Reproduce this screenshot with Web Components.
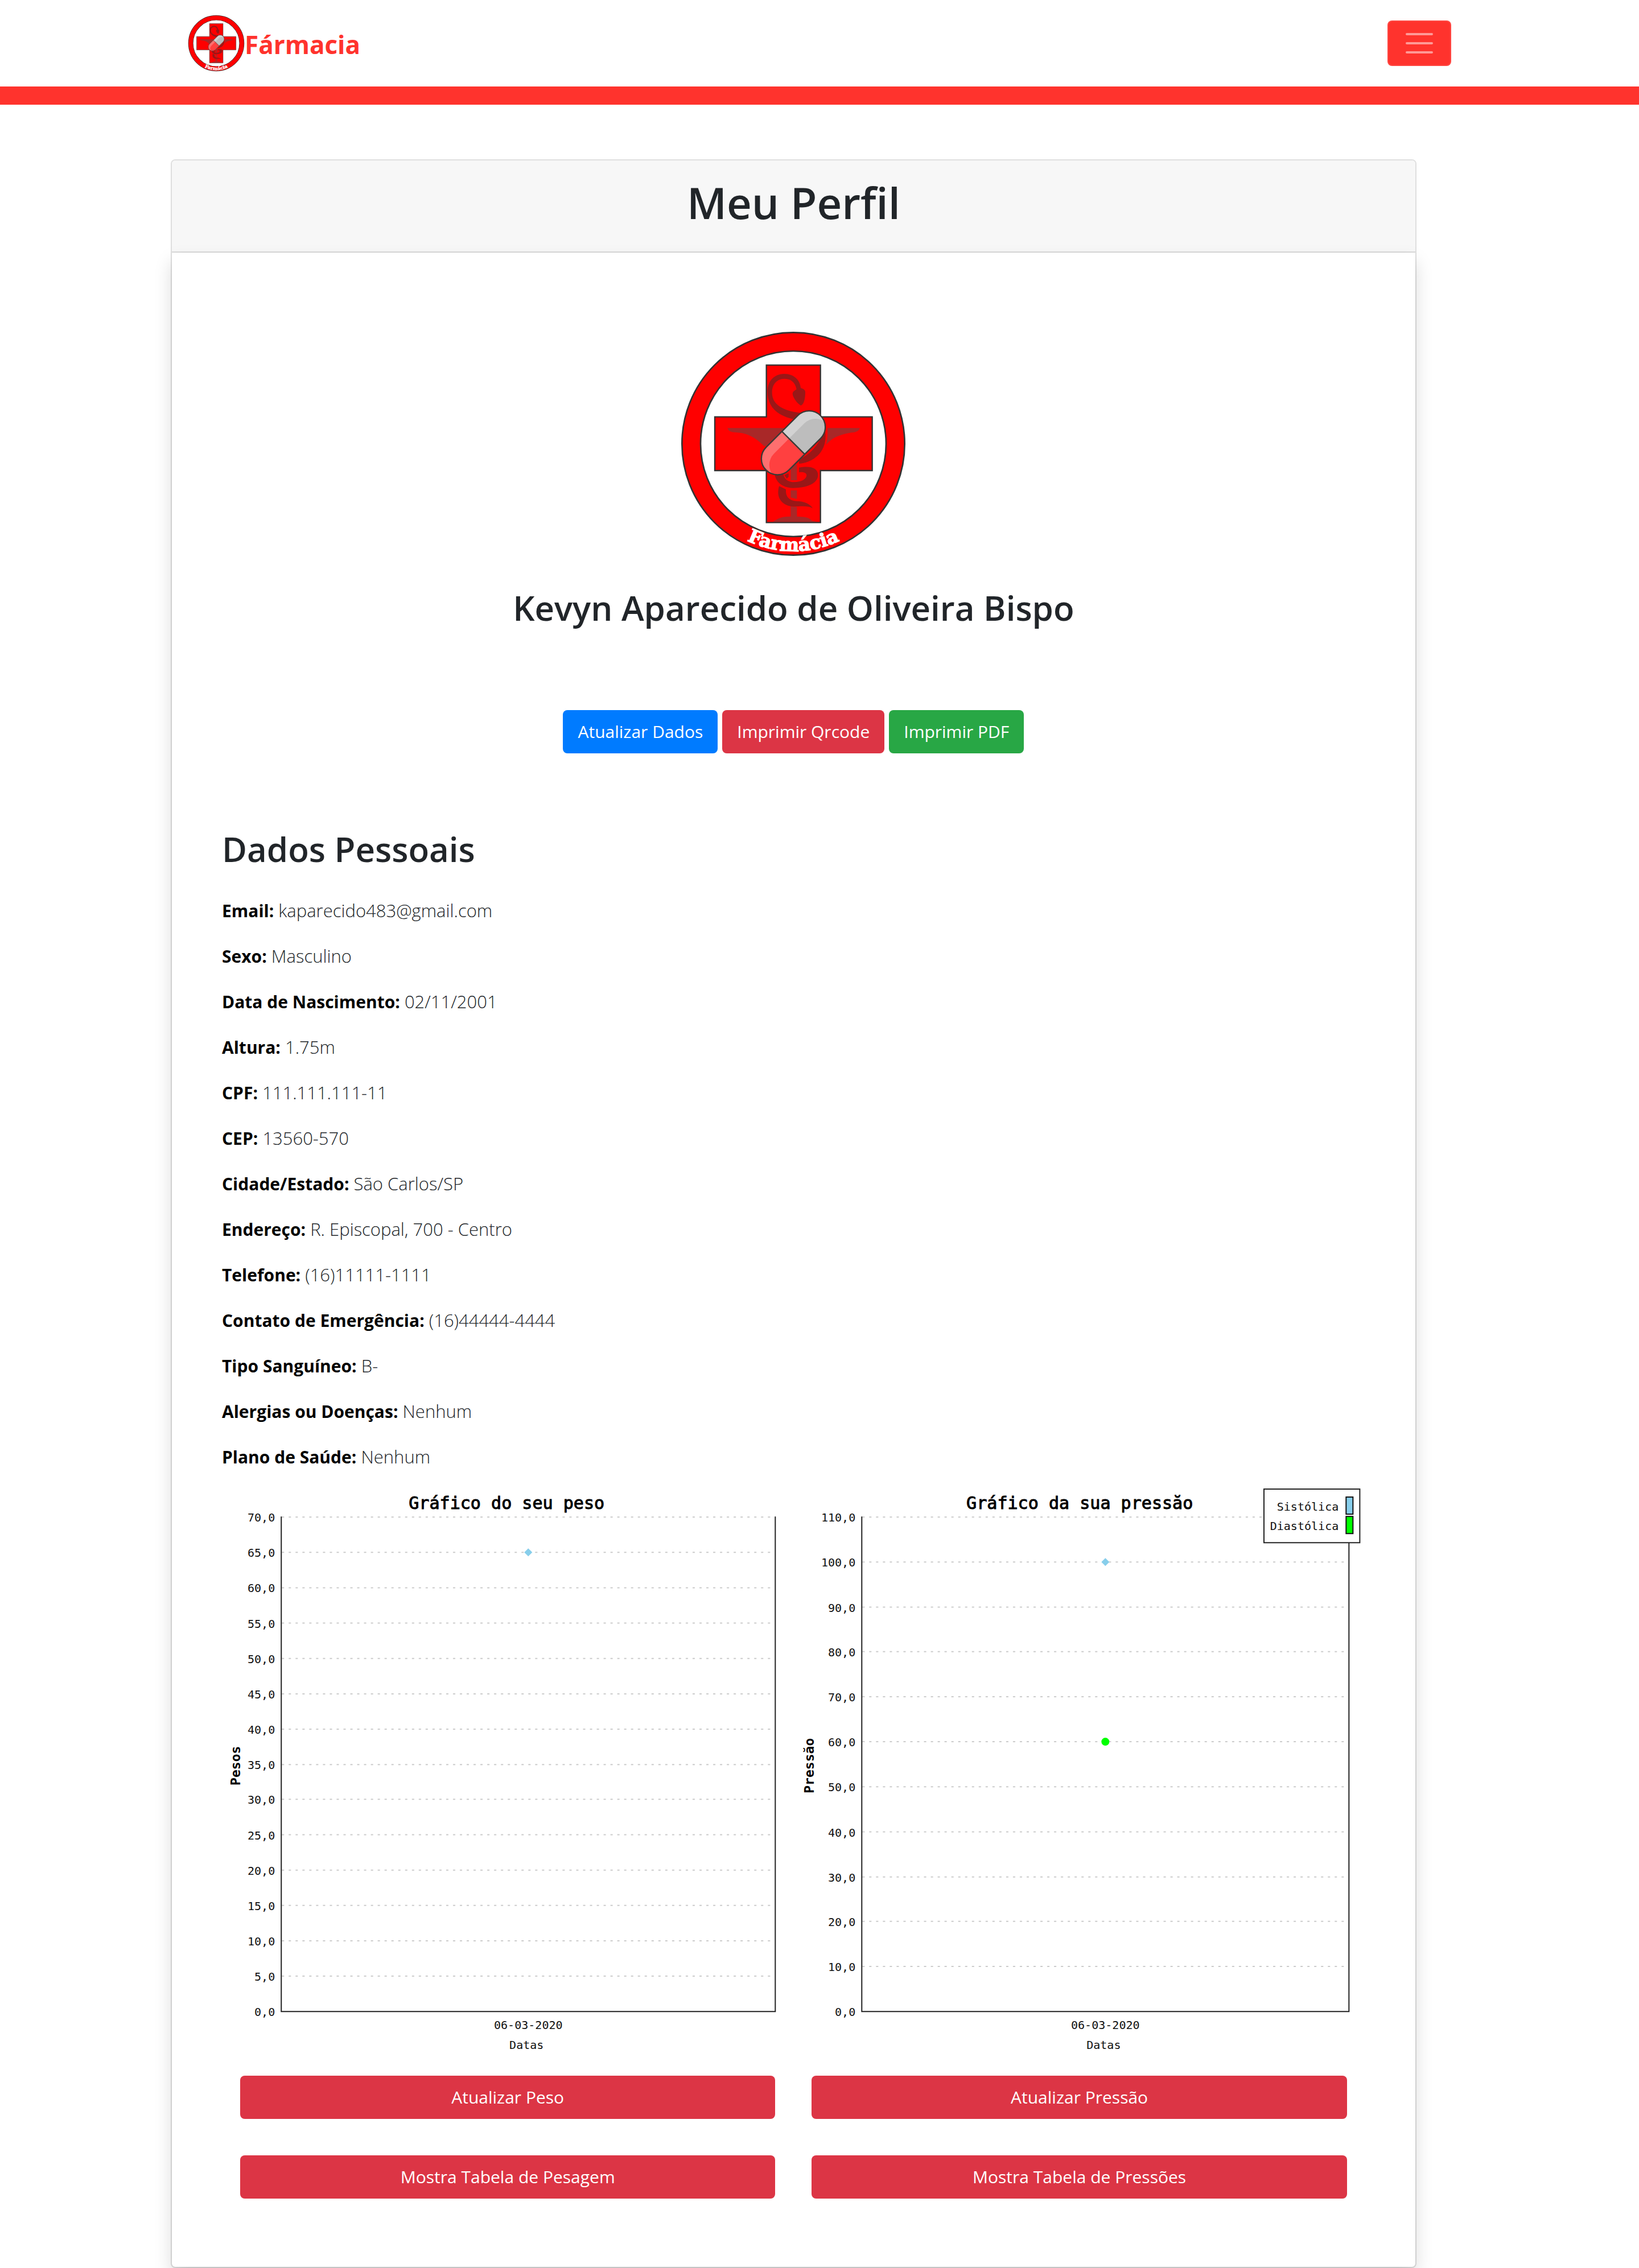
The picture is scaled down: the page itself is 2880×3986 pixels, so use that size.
<!DOCTYPE html>
<html lang="pt-BR">
<head>
<meta charset="utf-8">
<meta name="viewport" content="width=device-width, initial-scale=1">
<title>Fármacia - Meu Perfil</title>
<style>
  body {
    margin: 0;
    background: #fff;
    color: #212529;
    font-family: "Open Sans", "Noto Sans", sans-serif;
    font-size: 30px;
    line-height: 48px;
  }
</style>
</head>
<body>
<app-navbar>Fármacia</app-navbar>
<profile-card>
  <span slot="title">Meu Perfil</span>
  <profile-summary>
    <span slot="name">Kevyn Aparecido de Oliveira Bispo</span>
    <ui-button variant="primary">Atualizar Dados</ui-button>
    <ui-button variant="danger">Imprimir Qrcode</ui-button>
    <ui-button variant="success">Imprimir PDF</ui-button>
  </profile-summary>
  <detail-list>
    <span slot="heading">Dados Pessoais</span>
    <detail-row label="Email">kaparecido483@gmail.com</detail-row>
    <detail-row label="Sexo">Masculino</detail-row>
    <detail-row label="Data de Nascimento">02/11/2001</detail-row>
    <detail-row label="Altura">1.75m</detail-row>
    <detail-row label="CPF">111.111.111-11</detail-row>
    <detail-row label="CEP">13560-570</detail-row>
    <detail-row label="Cidade/Estado">São Carlos/SP</detail-row>
    <detail-row label="Endereço">R. Episcopal, 700 - Centro</detail-row>
    <detail-row label="Telefone">(16)11111-1111</detail-row>
    <detail-row label="Contato de Emergência">(16)44444-4444</detail-row>
    <detail-row label="Tipo Sanguíneo">B-</detail-row>
    <detail-row label="Alergias ou Doenças">Nenhum</detail-row>
    <detail-row label="Plano de Saúde">Nenhum</detail-row>
  </detail-list>
  <chart-grid>
    <chart-panel>
      <point-chart slot="chart" heading="Gráfico do seu peso" axis="Pesos" left="104" right="970" max="70" step="5"
        points='[{"value":65,"shape":"diamond","color":"#87ceeb"}]'></point-chart>
      <ui-button variant="danger">Atualizar Peso</ui-button>
      <ui-button variant="danger">Mostra Tabela de Pesagem</ui-button>
    </chart-panel>
    <chart-panel>
      <point-chart slot="chart" heading="Gráfico da sua pressăo" axis="Pressăo" left="120" right="974" max="110" step="10"
        points='[{"value":100,"shape":"diamond","color":"#87ceeb"},{"value":60,"shape":"circle","color":"#00ff00"}]'
        legend='[{"name":"Sistólica","color":"#87ceeb"},{"name":"Diastólica","color":"#00ff00"}]'></point-chart>
      <ui-button variant="danger">Atualizar Pressão</ui-button>
      <ui-button variant="danger">Mostra Tabela de Pressões</ui-button>
    </chart-panel>
  </chart-grid>
</profile-card>

<script>
const define = (name, html) => {
  const tpl = document.createElement('template');
  tpl.innerHTML = html;
  customElements.define(name, class extends HTMLElement {
    constructor() {
      super();
      this.attachShadow({ mode: 'open' }).append(tpl.content.cloneNode(true));
    }
  });
};

define('pharmacy-logo', `
<style>
  :host { display: block; }
  svg { display: block; width: 100%; height: 100%; }
  text { font: 900 98px "DejaVu Serif", serif; fill: #fff; stroke: #fff; stroke-width: 4; }
</style>
<svg viewBox="102 60 1200 1200" role="img" aria-label="Farmácia">
  <defs>
    <path id="arc" d="M136 660A566 566 0 0 0 1268 660"/>
    <clipPath id="capsule"><rect x="-203" y="-85" width="406" height="170" rx="85"/></clipPath>
    <clipPath id="half"><rect x="-203" y="-85" width="203" height="170"/></clipPath>
  </defs>
  <circle cx="702" cy="660" r="538" fill="#fff" stroke="#333" stroke-width="106"/>
  <circle cx="702" cy="660" r="538" fill="none" stroke="#f00" stroke-width="90"/>
  <path d="M560 245H845V518H1118V801H845V1075H560V801H288V518H560Z" fill="#f00" stroke="#333" stroke-width="7"/>
  <g fill="#a92828">
    <path d="M355 577H700V672H548C505 630 465 603 400 600C375 600 360 595 355 577Z"/>
    <path d="M882 577H1053C1045 600 1020 600 1000 602C930 615 900 635 875 665C882 635 884 605 882 577Z"/>
    <path d="M688 770H721V852H688ZM688 905H721V951L688 943ZM688 990L721 994V1043C750 1045 782 1043 800 1066L825 1071H595C640 1040 660 1045 688 1043Z"/>
  </g>
  <g fill="#9a1717">
    <path d="M719 372C710 330 685 317 655 317C615 318 590 345 590 390C590 455 650 490 760 499L700 530C610 508 566 460 566 385C566 325 605 291 655 291C705 291 738 325 741 365C755 370 765 375 765 387C765 425 757 452 742 458C725 450 698 415 698 395C700 382 712 378 719 372Z"/>
    <path d="M868 580C890 690 820 757 732 765L732 740C780 725 840 670 868 580Z"/>
    <path d="M732 785C790 775 832 785 832 825C832 870 770 893 700 893C640 890 608 860 603 815L650 822C655 850 680 862 705 862C745 862 772 845 772 825C770 812 755 808 732 810Z"/>
    <path d="M655 825L677 815V835L667 844Z"/>
    <path d="M627 883L663 900C660 940 680 960 720 962C760 962 795 980 804 1000C780 985 745 990 700 991C650 988 607 950 627 883Z"/>
  </g>
  <g transform="translate(702 655) rotate(-45)">
    <g clip-path="url(#capsule)">
      <rect x="-203" y="-85" width="406" height="170" fill="#d2d2d2"/>
      <rect x="-203" y="-32" width="400" height="170" rx="85" fill="#bdbdbd"/>
      <g clip-path="url(#half)">
        <rect x="-203" y="-85" width="406" height="170" fill="#ff6f6f"/>
        <rect x="-197" y="-32" width="400" height="170" rx="85" fill="#ff4040"/>
      </g>
    </g>
    <path d="M0 -85V85" stroke="#3a3a36" stroke-width="7"/>
    <rect x="-203" y="-85" width="406" height="170" rx="85" fill="none" stroke="#3a3a36" stroke-width="7"/>
  </g>
  <text text-anchor="middle"><textPath href="#arc" startOffset="50%">Farmácia</textPath></text>
</svg>`);

define('app-navbar', `
<style>
  :host { display: block; border-bottom: 32px solid #ff332d; background: #fff; }
  nav {
    box-sizing: border-box; max-width: 2280px; margin: 0 auto; padding: 26px 30px;
    display: flex; align-items: center; justify-content: space-between;
  }
  a { display: flex; align-items: center; color: #ff332d; font-size: 44px; font-weight: 700; text-decoration: none; }
  pharmacy-logo { width: 100px; height: 100px; }
  span { padding-top: 4px; }
  button {
    width: 112px; height: 80px; padding: 0; border: 2px solid rgba(255,255,255,.1); border-radius: 8px;
    background: #ff332d; display: flex; flex-direction: column; align-items: center; justify-content: center; gap: 12px;
  }
  i { width: 48px; height: 4px; border-radius: 2px; background: rgba(255,255,255,.5); }
</style>
<nav>
  <a href="#"><pharmacy-logo></pharmacy-logo><span><slot></slot></span></a>
  <button type="button" aria-label="Abrir menu"><i></i><i></i><i></i></button>
</nav>`);

define('profile-card', `
<style>
  :host { display: block; box-sizing: border-box; max-width: 2280px; margin: 96px auto 0; }
  article { box-sizing: border-box; width: 96%; border: 2px solid rgba(0,0,0,.125); border-radius: 8px; }
  header {
    padding: 26px 40px 38px; border-bottom: 2px solid rgba(0,0,0,.125); border-radius: 6px 6px 0 0;
    background: #f7f7f7; text-align: center;
  }
  h1 { margin: 0; font-size: 76px; line-height: 96px; font-weight: 600; }
  section { padding: 136px 88px 88px; box-shadow: 0 16px 32px rgba(0,0,0,.15); border-radius: 0 0 6px 6px; }
</style>
<article>
  <header><h1><slot name="title"></slot></h1></header>
  <section><slot></slot></section>
</article>`);

define('profile-summary', `
<style>
  :host { display: flex; flex-direction: column; align-items: center; }
  pharmacy-logo { width: 400px; height: 400px; }
  h2 { margin: 50px 0 142px; font-size: 60px; line-height: 76px; font-weight: 600; }
  div { display: flex; gap: 8px; }
</style>
<pharmacy-logo></pharmacy-logo>
<h2><slot name="name"></slot></h2>
<div><slot></slot></div>`);

define('ui-button', `
<style>
  :host { display: block; }
  button {
    box-sizing: border-box; width: 100%; padding: 12px 24px; border: 2px solid transparent; border-radius: 8px;
    color: #fff; background: #dc3545; background-clip: border-box; background-origin: border-box;
    font: inherit; line-height: 48px;
  }
  :host([variant="primary"]) button { background-color: #007bff; }
  :host([variant="success"]) button { background-color: #28a745; }
</style>
<button type="button"><slot></slot></button>`);

define('detail-list', `
<style>
  :host { display: flex; flex-direction: column; gap: 32px; padding-top: 130px; }
  h2 { margin: 0 0 14px; font-size: 60px; line-height: 76px; font-weight: 600; }
</style>
<h2><slot name="heading"></slot></h2>
<slot></slot>`);

customElements.define('detail-row', class extends HTMLElement {
  constructor() {
    super();
    this.attachShadow({ mode: 'open' }).innerHTML = `
      <style>
        :host { display: block; font-size: 31px; font-weight: 300; }
        b { font-size: 30px; line-height: 1; font-weight: 700; color: #000; }
      </style>
      <b>${this.getAttribute('label')}:</b> <slot></slot>`;
  }
});

define('chart-grid', `
<style>
  :host { display: grid; grid-template-columns: 1fr 1fr; padding-top: 16px; }
</style>
<slot></slot>`);

define('chart-panel', `
<style>
  :host { display: block; }
  div { display: flex; flex-direction: column; gap: 64px; padding: 16px 32px 32px; }
</style>
<slot name="chart"></slot>
<div><slot></slot></div>`);

customElements.define('point-chart', class extends HTMLElement {
  constructor() {
    super();
    const attr = name => this.getAttribute(name);
    const left = +attr('left'), right = +attr('right'), max = +attr('max'), step = +attr('step');
    const top = 66, bottom = 933, mid = (left + right) / 2;
    const y = v => Math.round(bottom - v * (bottom - top) / max);
    let grid = '', labels = '';
    for (let v = 0; v <= max; v += step) {
      if (v) grid += `<path d="M${left + 1} ${y(v)}H${right - 4}"/>`;
      labels += `<text x="${left - 11}" y="${y(v) + 8}" text-anchor="end">${v},0</text>`;
    }
    const marks = JSON.parse(attr('points')).map(p => p.shape === 'circle'
      ? `<circle cx="${mid}" cy="${y(p.value)}" r="7" fill="${p.color}"/>`
      : `<path d="M${mid - 7} ${y(p.value)}l7-7 7 7-7 7z" fill="${p.color}"/>`).join('');
    const entries = JSON.parse(attr('legend') || '[]');
    const legend = entries.length ? `
      <rect x="825" y="17" width="168" height="94" fill="#fff" stroke="#222" stroke-width="2"/>` +
      entries.map((e, i) => `
        <text x="956" y="${55 + i * 34}" text-anchor="end">${e.name}</text>
        <rect x="969" y="${31 + i * 34}" width="12" height="30" fill="${e.color}" stroke="#111" stroke-width="2"/>`).join('') : '';
    this.attachShadow({ mode: 'open' }).innerHTML = `
      <style>
        :host { display: block; }
        svg { display: block; width: 100%; }
        text { font: 20px "DejaVu Sans Mono", monospace; fill: #111; }
        .heading { font-size: 30px; fill: #000; stroke: #000; stroke-width: 1; }
        .axis { font-size: 23px; font-weight: 700; fill: #000; }
        .grid { stroke: #ccc; stroke-width: 2; stroke-dasharray: 4 8; }
        .frame { fill: none; stroke: #222; stroke-width: 2; }
      </style>
      <svg viewBox="0 0 1002 1030" role="img" aria-label="${attr('heading')}">
        <text class="heading" x="${mid - 38 - (left > 110 ? 7 : 0)}" y="52" text-anchor="middle">${attr('heading')}</text>
        <g class="grid">${grid}</g>
        <path class="frame" d="M${left} ${top - 1}V${bottom}H${right}V${top - 1}"/>
        ${labels}${marks}
        <text x="${mid}" y="964" text-anchor="middle">06-03-2020</text>
        <text x="${mid - 3}" y="999" text-anchor="middle">Datas</text>
        <text class="axis" transform="translate(${left - 75 + (left > 110 ? -9 : 3)} 502) rotate(-90)" text-anchor="middle">${attr('axis')}</text>
        ${legend}
      </svg>`;
  }
});
</script>
</body>
</html>
